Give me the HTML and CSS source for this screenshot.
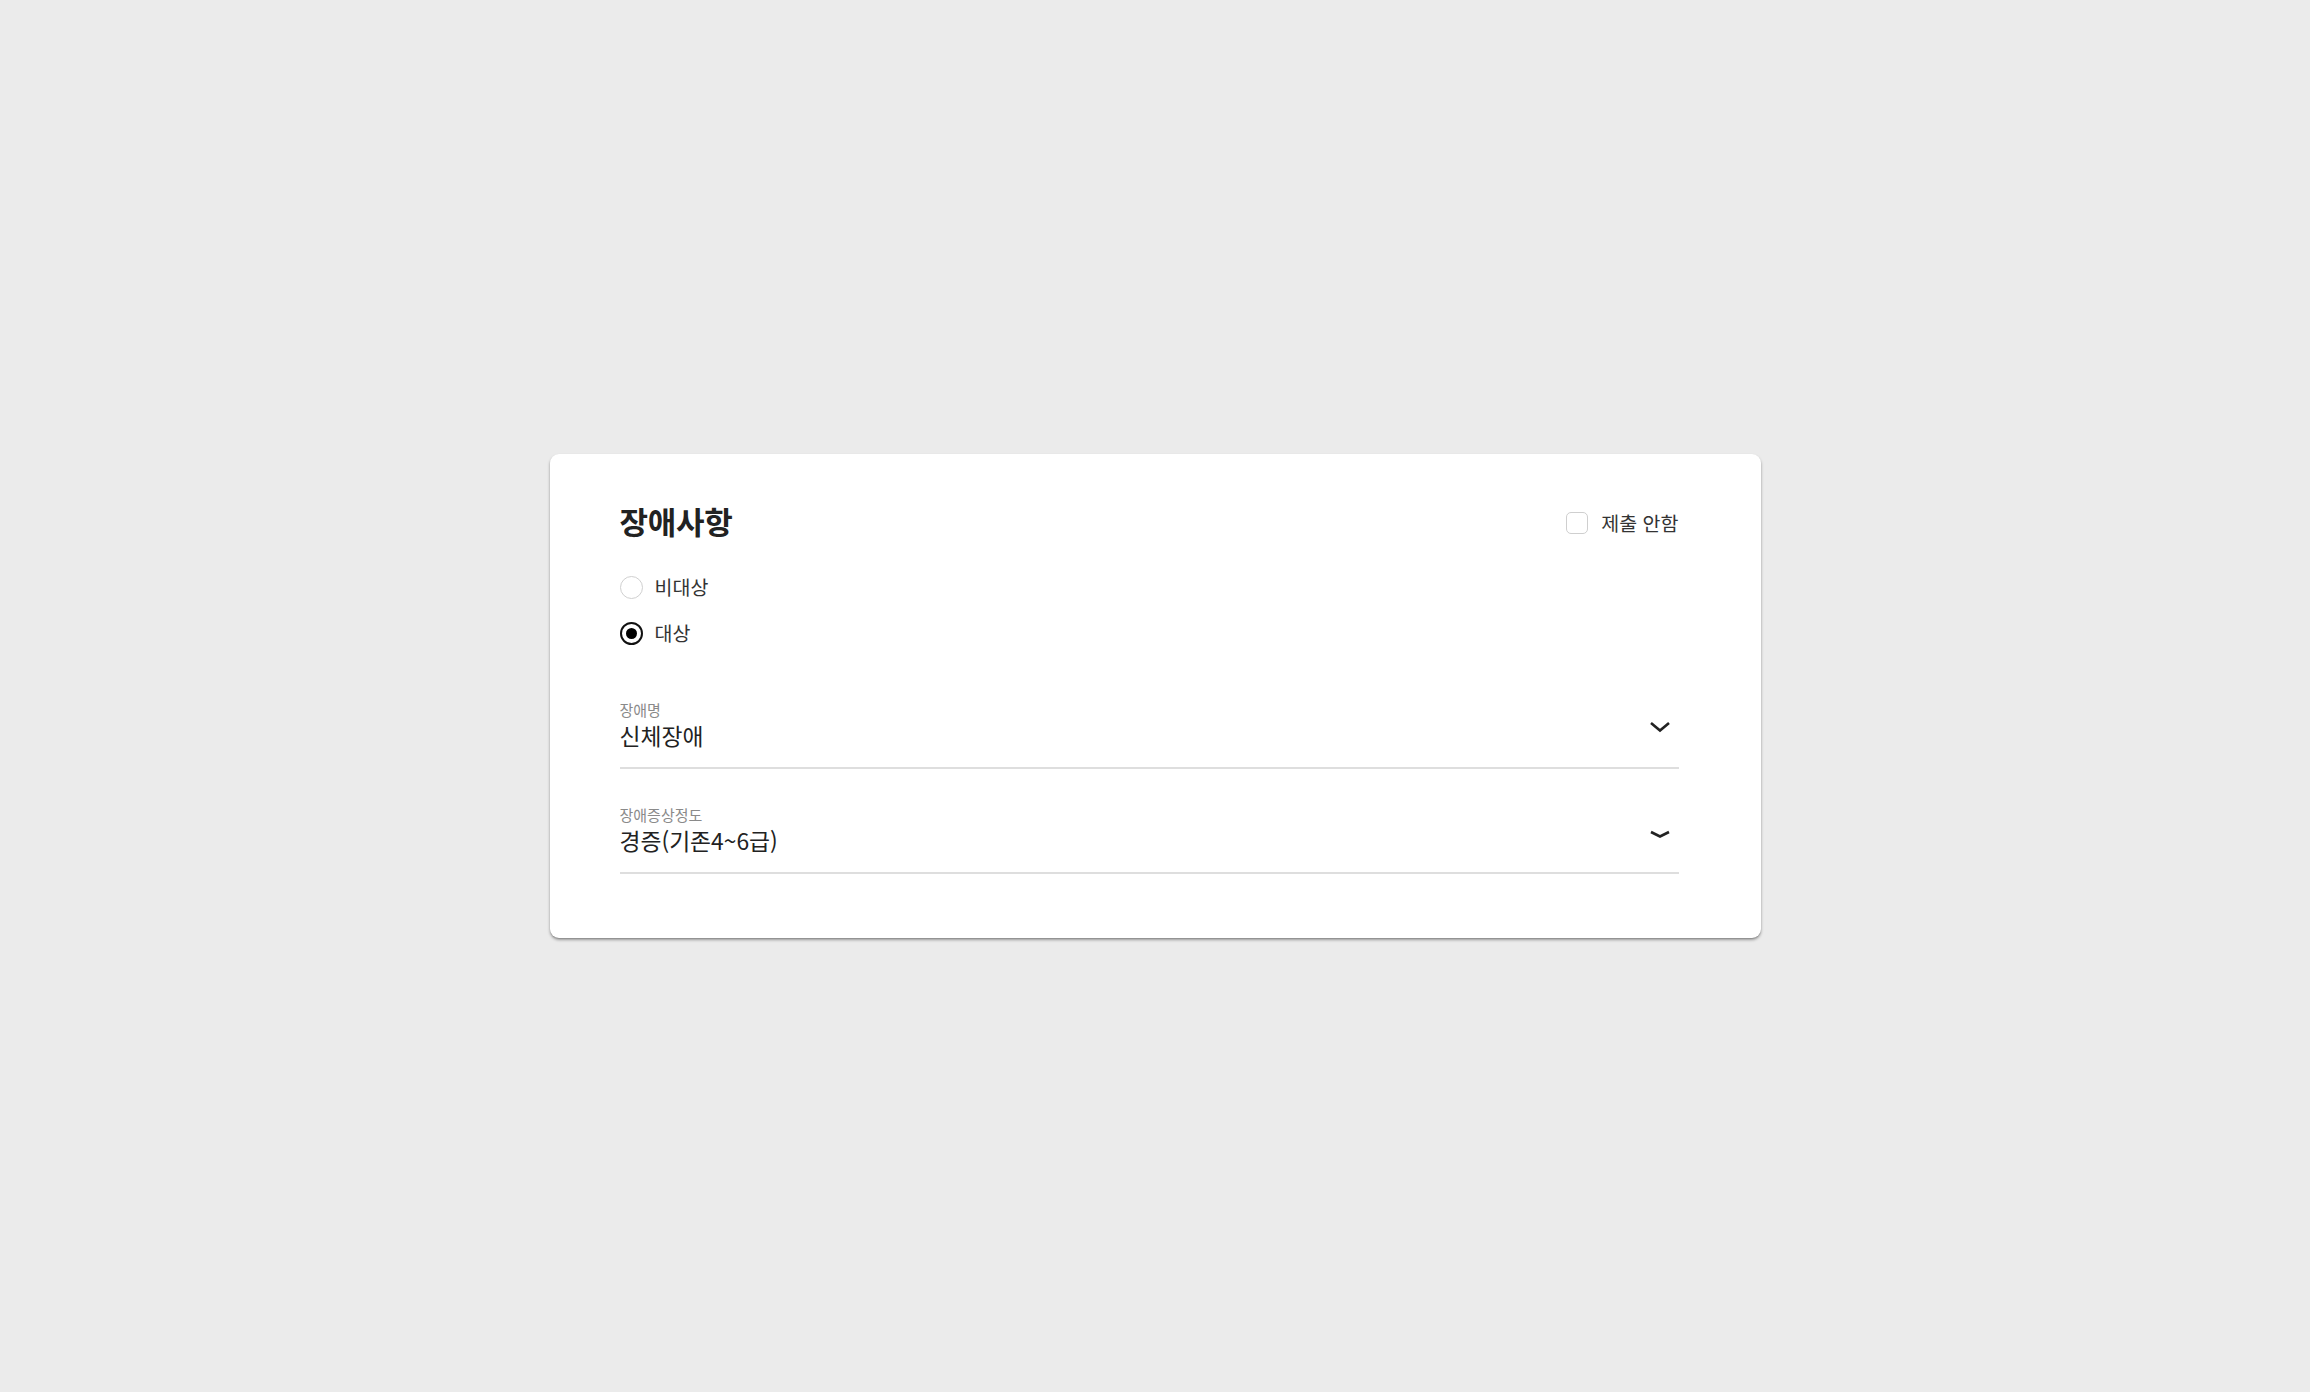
FILE: index.html
```html
<!DOCTYPE html>
<html lang="ko">
<head>
<meta charset="utf-8">
<title>장애사항</title>
<link rel="stylesheet" href="styles.css">
</head>
<body>
<main class="page">
  <section class="card">
    <header class="card-head">
      <h2 class="title">장애사항</h2>
      <label class="check">
        <span class="check-box"></span>
        <span class="check-label">제출 안함</span>
      </label>
    </header>
    <div class="radios">
      <label class="radio">
        <span class="radio-dot"></span>
        <span class="radio-label">비대상</span>
      </label>
      <label class="radio">
        <span class="radio-dot is-on"></span>
        <span class="radio-label">대상</span>
      </label>
    </div>
    <div class="fields">
      <div class="field">
        <div class="field-text">
          <span class="field-label">장애명</span>
          <span class="field-value">신체장애</span>
        </div>
        <svg class="chev" width="22" height="14" viewBox="0 0 22 14"><path d="M2 3 L11 10.5 L20 3" fill="none" stroke="#222" stroke-width="2.6"/></svg>
      </div>
      <div class="field">
        <div class="field-text">
          <span class="field-label">장애증상정도</span>
          <span class="field-value">경증(기존4~6급)</span>
        </div>
        <svg class="chev chev-flat" width="22" height="14" viewBox="0 0 22 14"><path d="M2 4 L11 8.5 L20 4" fill="none" stroke="#222" stroke-width="2.6"/></svg>
      </div>
    </div>
  </section>
</main>
</body>
</html>
```
FILE: styles.css
```css
* { box-sizing: border-box; }
html, body { margin: 0; padding: 0; }
body {
  background: #ebebeb;
  font-family: "Noto Sans CJK KR", "Noto Sans", sans-serif;
  color: #222;
}
.page {
  height: 100vh;
  display: flex;
  align-items: center;
  justify-content: center;
}
.card {
  width: 1211px;
  background: #fff;
  border-radius: 9px;
  box-shadow: 0 2px 3px rgba(0,0,0,0.35), 0 1px 1px rgba(0,0,0,0.12);
  padding: 38px 82px 64px 70px;
}
.card-head {
  display: flex;
  justify-content: space-between;
  align-items: center;
  height: 58px;
}
.title {
  margin: 0;
  font-size: 31px;
  line-height: 58px;
  font-weight: 700;
  color: #222;
  letter-spacing: -0.3px;
}
.check {
  display: flex;
  align-items: center;
  gap: 13px;
  margin-top: 4px;
}
.check-box {
  width: 22px;
  height: 22px;
  border: 1.5px solid #cfcfcf;
  border-radius: 5px;
}
.check-label {
  font-size: 19.5px;
  line-height: 24px;
  color: #333;
}
.radios {
  display: flex;
  flex-direction: column;
  gap: 22px;
  margin-top: 25px;
}
.radio {
  display: flex;
  align-items: center;
  gap: 12px;
  height: 24px;
}
.radio-dot {
  width: 23px;
  height: 23px;
  border: 1.5px solid #d0d0d0;
  border-radius: 50%;
  display: flex;
  align-items: center;
  justify-content: center;
}
.radio-dot.is-on {
  border: 2.5px solid #111;
}
.radio-dot.is-on::after {
  content: "";
  width: 11px;
  height: 11px;
  border-radius: 50%;
  background: #000;
}
.radio-label {
  font-size: 19.5px;
  line-height: 24px;
  color: #333;
}
.fields {
  margin-top: 54px;
  display: flex;
  flex-direction: column;
  gap: 35px;
}
.field {
  display: flex;
  align-items: flex-start;
  justify-content: space-between;
  border-bottom: 2px solid #dedede;
  padding-bottom: 16px;
}
.field-text {
  display: flex;
  flex-direction: column;
}
.field-label {
  font-size: 15px;
  line-height: 22px;
  color: #8a8a8a;
}
.field-value {
  font-size: 22.8px;
  line-height: 30px;
  color: #222;
}
.chev {
  margin-right: 8px;
  margin-top: 21px;
}
.chev-flat {
  margin-top: 24px;
}
```
